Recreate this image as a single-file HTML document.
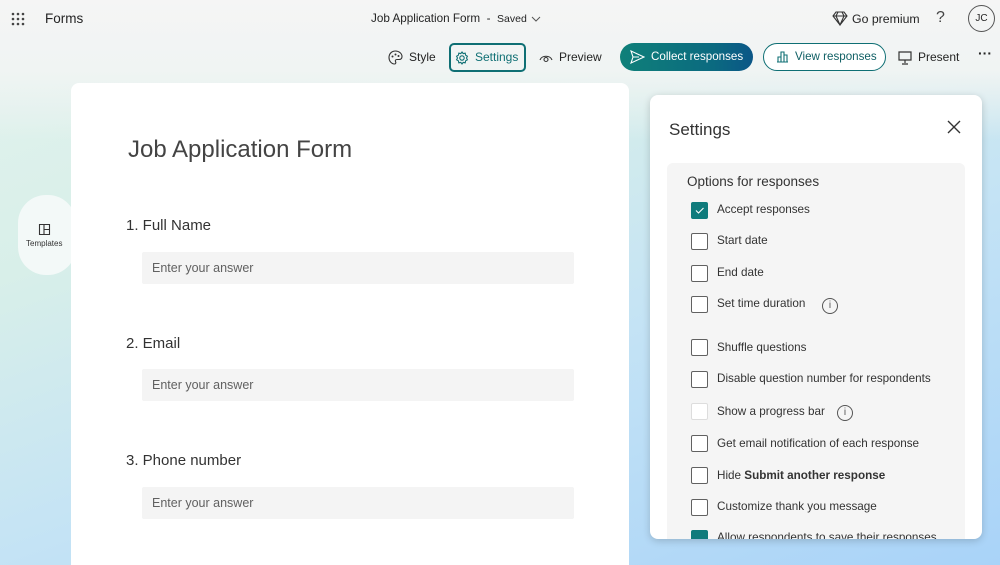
<!DOCTYPE html>
<html><head><meta charset="utf-8"><style>
*{box-sizing:border-box;margin:0;padding:0}
html,body{width:1000px;height:565px;overflow:hidden}
body{font-family:"Liberation Sans",sans-serif;color:#242424;position:relative;
background:linear-gradient(180deg,#f5f5f5 0px,#f0f4f3 70px,rgba(240,244,243,0) 140px),linear-gradient(160deg,#e3f3ee 0%,#d8efe9 30%,#c4e3f5 60%,#a9d3f8 100%);}
.abs{position:absolute}
.t{position:absolute;white-space:nowrap}
.card{left:71px;top:83px;width:558px;height:482px;background:#fff;border-radius:8px 8px 0 0}
.inp{position:absolute;left:142px;width:432px;height:32px;background:#f4f4f4;border-radius:2px;font-size:12.5px;color:#616161;padding:9px 10px}
.q{position:absolute;left:126px;font-size:15px;color:#333}
.panel{left:650px;top:95px;width:332px;height:444px;background:#fff;border-radius:8px;box-shadow:0 2px 8px rgba(0,0,0,.18);overflow:hidden}
.inner{position:absolute;left:17px;top:68px;width:298px;height:400px;background:#f5f5f5;border-radius:6px}
.cb{position:absolute;left:41px;width:17px;height:17px;border:1.3px solid #616161;border-radius:2px;background:#fff}
.cb.on{background:#0f7b7c;border-color:#0f7b7c}
.lbl{position:absolute;left:67px;font-size:11.7px;color:#333;white-space:nowrap}
.info{position:absolute;width:16px;height:16px;border:1.2px solid #555;border-radius:50%;font-size:10px;text-align:center;line-height:14px;color:#555}
.tb{position:absolute;top:50px;font-size:12px;color:#242424;white-space:nowrap}
</style></head><body>
<svg class="abs" style="left:11px;top:12px" width="14" height="14" viewBox="0 0 14 14" fill="#444"><g><circle cx="2" cy="2" r="1.3"/><circle cx="7" cy="2" r="1.3"/><circle cx="12" cy="2" r="1.3"/><circle cx="2" cy="7" r="1.3"/><circle cx="7" cy="7" r="1.3"/><circle cx="12" cy="7" r="1.3"/><circle cx="2" cy="12" r="1.3"/><circle cx="7" cy="12" r="1.3"/><circle cx="12" cy="12" r="1.3"/></g></svg>
<div class="t" style="left:45px;top:11px;font-size:13.5px">Forms</div>
<div class="t" style="left:371px;top:12px;font-size:11.7px">Job Application Form &nbsp;- &nbsp;<span style="font-size:10.5px">Saved</span></div>
<svg class="abs" style="left:531px;top:16px" width="10" height="6" viewBox="0 0 10 6"><path d="M1 1l4 4 4-4" fill="none" stroke="#555" stroke-width="1"/></svg>
<svg class="abs" style="left:832px;top:11px" width="16" height="15" viewBox="0 0 16 15"><path d="M4 1h8l3 4-7 9-7-9z M1 5h14 M6 1l-2 4 4 9 4-9-2-4" fill="none" stroke="#333" stroke-width="1.1"/></svg>
<div class="t" style="left:852px;top:12px;font-size:12.3px">Go premium</div>
<div class="t" style="left:936px;top:9px;font-size:16px;color:#444">?</div>
<div class="abs" style="left:968px;top:5px;width:27px;height:27px;border:1px solid #555;border-radius:50%;font-size:10px;text-align:center;line-height:25px">JC</div>
<svg class="abs" style="left:388px;top:50px" width="15" height="15" viewBox="0 0 15 15"><path d="M7.5 1C3.5 1 1 4 1 7.5S3.5 14 6.5 14c1.5 0 1.5-1.5 1-2.5-.5-1 0-2 1.5-2h2c2 0 3-1 3-3C14 3.5 11 1 7.5 1z" fill="none" stroke="#333" stroke-width="1.1"/><circle cx="4.5" cy="6.5" r="1" fill="#333"/><circle cx="7.5" cy="4.5" r="1" fill="#333"/><circle cx="10.5" cy="6" r="1" fill="#333"/></svg>
<div class="tb" style="left:409px">Style</div>
<div class="abs" style="left:449px;top:43px;width:77px;height:29px;border:2px solid #0f6f74;border-radius:5px"></div>
<svg class="abs" style="left:455px;top:51px" width="14" height="14" viewBox="0 0 14 14"><circle cx="7" cy="7" r="2.2" fill="none" stroke="#0f6f74" stroke-width="1.1"/><path d="M7 1l1.2 1.6 2-.4.4 2 1.8 1-.9 1.8.9 1.8-1.8 1-.4 2-2-.4L7 13l-1.2-1.6-2 .4-.4-2-1.8-1 .9-1.8-.9-1.8 1.8-1 .4-2 2 .4z" fill="none" stroke="#0f6f74" stroke-width="1.1"/></svg>
<div class="tb" style="left:475px;color:#0f6f74">Settings</div>
<svg class="abs" style="left:539px;top:52px" width="14" height="11" viewBox="0 0 14 11"><path d="M1 8C2.5 3 11.5 3 13 8" fill="none" stroke="#333" stroke-width="1.1"/><circle cx="7" cy="7.5" r="2" fill="none" stroke="#333" stroke-width="1.1"/></svg>
<div class="tb" style="left:559px">Preview</div>
<div class="abs" style="left:620px;top:43px;width:133px;height:28px;border-radius:14px;background:linear-gradient(90deg,#0f8079,#0b6a80 70%,#0b5687)"></div>
<svg class="abs" style="left:630px;top:50px" width="15" height="14" viewBox="0 0 15 14"><path d="M1 1l13 6-13 6 2-6z M3 7h6" fill="none" stroke="#fff" stroke-width="1.1"/></svg>
<div class="tb" style="left:651px;color:#fff;font-size:11.6px">Collect responses</div>
<div class="abs" style="left:763px;top:43px;width:123px;height:28px;border-radius:14px;border:1px solid #0f6f74;background:#fff"></div>
<svg class="abs" style="left:776px;top:50px" width="13" height="13" viewBox="0 0 13 13"><path d="M1 12h11 M2 12V7h3v5 M5 12V2h3v10 M8 12V5h3v7" fill="none" stroke="#0f6f74" stroke-width="1.1"/></svg>
<div class="tb" style="left:795px;color:#0f5f64;font-size:11.6px">View responses</div>
<svg class="abs" style="left:898px;top:51px" width="14" height="14" viewBox="0 0 14 14"><path d="M1 1h12v8H1z M7 9v3 M4 13h6" fill="none" stroke="#333" stroke-width="1.2"/></svg>
<div class="tb" style="left:918px">Present</div>
<div class="tb" style="left:978px;top:45px;font-size:14px;font-weight:bold">···</div>
<div class="abs" style="left:18px;top:195px;width:58px;height:80px;border-radius:28px;background:#f3f9f8"></div>
<svg class="abs" style="left:38px;top:223px" width="13" height="13" viewBox="0 0 13 13"><path d="M1.5 1.5h10v10h-10z M6 1.5v10 M6 6.5h5.5" fill="none" stroke="#333" stroke-width="1.1"/></svg>
<div class="t" style="left:26px;top:239px;font-size:8px;color:#333">Templates</div>
<div class="abs card"></div>
<div class="t" style="left:128px;top:136px;font-size:24px;color:#444">Job Application Form</div>
<div class="q" style="top:217px">1. Full Name</div>
<div class="inp" style="top:252px">Enter your answer</div>
<div class="q" style="top:335px">2. Email</div>
<div class="inp" style="top:369px">Enter your answer</div>
<div class="q" style="top:452px">3. Phone number</div>
<div class="inp" style="top:487px">Enter your answer</div>
<div class="abs panel">
<div class="t" style="left:19px;top:25px;font-size:17px;color:#333">Settings</div>
<svg class="abs" style="left:297px;top:25px" width="14" height="14" viewBox="0 0 14 14"><path d="M1 1l12 12M13 1L1 13" stroke="#333" stroke-width="1.4"/></svg>
<div class="inner">
<div class="t" style="left:20px;top:11px;font-size:13.5px;color:#333">Options for responses</div>
</div>
<div class="cb on" style="top:107px"><svg width="15" height="15" viewBox="0 0 15 15"><path d="M4 7.5l2.5 2.5 5-5" fill="none" stroke="#fff" stroke-width="1.1"/></svg></div><div class="lbl" style="top:108px">Accept responses</div>
<div class="cb" style="top:138px"></div><div class="lbl" style="top:139px">Start date</div>
<div class="cb" style="top:170px"></div><div class="lbl" style="top:171px">End date</div>
<div class="cb" style="top:201px"></div><div class="lbl" style="top:202px">Set time duration</div><div class="info" style="left:172px;top:203px">i</div>
<div class="cb" style="top:244px"></div><div class="lbl" style="top:246px">Shuffle questions</div>
<div class="cb" style="top:276px"></div><div class="lbl" style="top:277px">Disable question number for respondents</div>
<div class="cb" style="top:308px;border-color:#ddd"></div><div class="lbl" style="top:310px">Show a progress bar</div><div class="info" style="left:187px;top:310px">i</div>
<div class="cb" style="top:340px"></div><div class="lbl" style="top:342px">Get email notification of each response</div>
<div class="cb" style="top:372px"></div><div class="lbl" style="top:374px">Hide <b>Submit another response</b></div>
<div class="cb" style="top:404px"></div><div class="lbl" style="top:405px">Customize thank you message</div>
<div class="cb on" style="top:435px"></div><div class="lbl" style="top:436px">Allow respondents to save their responses</div>
</div>
</body></html>
